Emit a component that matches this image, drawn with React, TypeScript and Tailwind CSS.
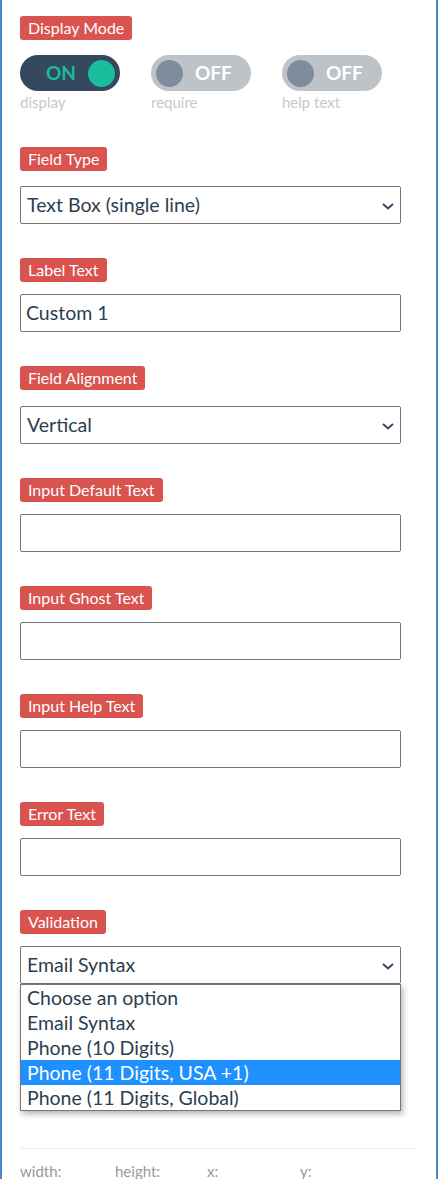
import React from "react";

const Badge = ({ children }: { children: React.ReactNode }) => (
  <div className="flex">
    <span className="h-[24px] rounded-[3px] bg-[#d9534f] px-[8px] text-[16px] leading-[24px] text-white">
      {children}
    </span>
  </div>
);

const Chevron = () => (
  <svg width="12" height="7" viewBox="0 0 12 7" className="absolute right-[6px] top-[16px]">
    <path d="M1 1l5 4.5L11 1" fill="none" stroke="#34495e" strokeWidth="2" />
  </svg>
);

const SelectBox = ({ value }: { value: string }) => (
  <div className="relative h-[38px] w-[381px] rounded-[2px] border border-[#767676] bg-white pl-[6px] text-[19.5px] leading-[36px] text-[#2c3e50]">
    {value}
    <Chevron />
  </div>
);

const TextBox = ({ value = "" }: { value?: string }) => (
  <div className="h-[38px] w-[381px] rounded-[2px] border border-[#767676] bg-white pl-[5px] text-[19.5px] leading-[36px] text-[#2c3e50]">
    {value}
  </div>
);

const ToggleOn = () => (
  <div className="flex h-[36px] w-[100px] items-center justify-between rounded-full bg-[#34495e] pl-[26px] pr-[5px]">
    <span className="text-[19px] font-bold text-[#1abc9c]">ON</span>
    <span className="h-[27px] w-[27px] rounded-full bg-[#1abc9c]" />
  </div>
);

const ToggleOff = () => (
  <div className="flex h-[36px] w-[100px] items-center rounded-full bg-[#bdc3c7] pl-[5px]">
    <span className="h-[27px] w-[27px] rounded-full bg-[#7f8c9d]" />
    <span className="ml-[12px] text-[19px] font-bold text-white">OFF</span>
  </div>
);

const ToggleCol = ({ on, label }: { on?: boolean; label: string }) => (
  <div className="flex w-[100px] flex-col">
    {on ? <ToggleOn /> : <ToggleOff />}
    <span className="mt-[2px] text-[15px] leading-[18px] text-[#c8c8c8]">{label}</span>
  </div>
);

export default function App() {
  return (
    <div
      className="min-h-[1179px] w-[438px] border-x-2 border-[#4a86c5] bg-white pl-[18px] pr-[20px] pt-[16px]"
      style={{ fontFamily: "Lato, 'Open Sans', sans-serif" }}
    >
      <Badge>Display Mode</Badge>
      <div className="mt-[15px] flex gap-[31px]">
        <ToggleCol on label="display" />
        <ToggleCol label="require" />
        <ToggleCol label="help text" />
      </div>

      <div className="mt-[36px]">
        <Badge>Field Type</Badge>
        <div className="mt-[15px]">
          <SelectBox value="Text Box (single line)" />
        </div>
      </div>

      <div className="mt-[34px]">
        <Badge>Label Text</Badge>
        <div className="mt-[12px]">
          <TextBox value="Custom 1" />
        </div>
      </div>

      <div className="mt-[34px]">
        <Badge>Field Alignment</Badge>
        <div className="mt-[16px]">
          <SelectBox value="Vertical" />
        </div>
      </div>

      <div className="mt-[34px]">
        <Badge>Input Default Text</Badge>
        <div className="mt-[12px]">
          <TextBox />
        </div>
      </div>

      <div className="mt-[34px]">
        <Badge>Input Ghost Text</Badge>
        <div className="mt-[12px]">
          <TextBox />
        </div>
      </div>

      <div className="mt-[34px]">
        <Badge>Input Help Text</Badge>
        <div className="mt-[12px]">
          <TextBox />
        </div>
      </div>

      <div className="mt-[34px]">
        <Badge>Error Text</Badge>
        <div className="mt-[12px]">
          <TextBox />
        </div>
      </div>

      <div className="mt-[34px]">
        <Badge>Validation</Badge>
        <div className="relative mt-[12px]">
          <SelectBox value="Email Syntax" />
          <div className="absolute left-0 top-[38px] z-10 w-[381px] border border-[#767676] bg-white text-[19.5px] leading-[25px] text-[#2c3e50] shadow-[2px_3px_6px_rgba(0,0,0,0.3)]">
            <div className="pl-[6px]">Choose an option</div>
            <div className="pl-[6px]">Email Syntax</div>
            <div className="pl-[6px]">Phone (10 Digits)</div>
            <div className="bg-[#1e90ff] pl-[6px] text-white">Phone (11 Digits, USA +1)</div>
            <div className="pl-[6px]">Phone (11 Digits, Global)</div>
          </div>
        </div>
      </div>

      <div className="mt-[164px] w-[398px] border-t border-[#eeeeee]" />
      <div className="mt-[12px] flex text-[15px] leading-[20px] text-[#999999]">
        <span className="w-[95px]">width:</span>
        <span className="w-[92px]">height:</span>
        <span className="w-[93px]">x:</span>
        <span>y:</span>
      </div>
    </div>
  );
}
